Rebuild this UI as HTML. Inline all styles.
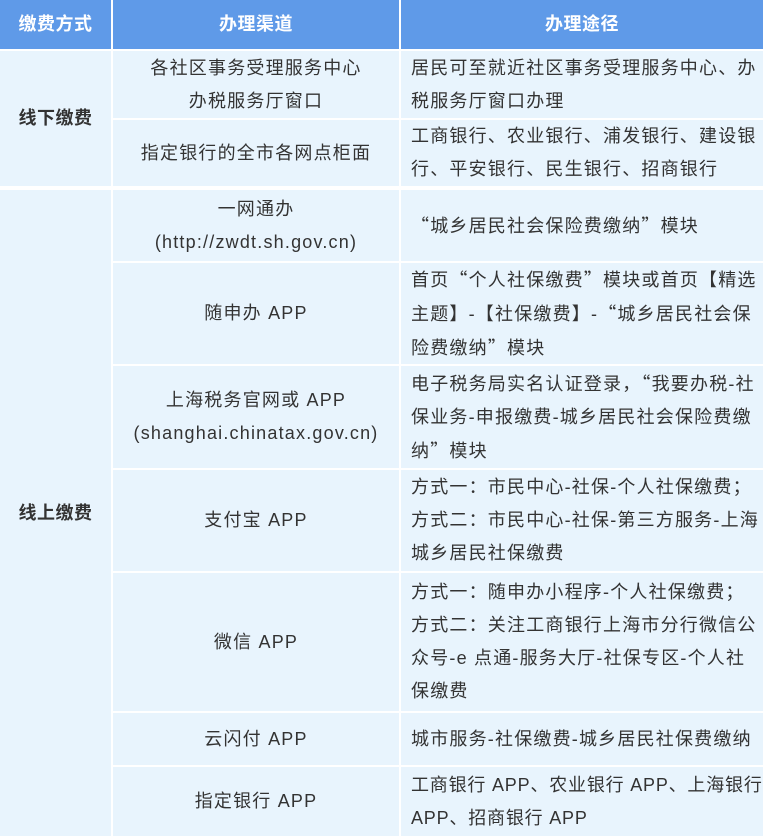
<!DOCTYPE html>
<html><head><meta charset="utf-8"><style>
body{margin:0;width:763px;height:839px;background:#fff;font-family:"Liberation Sans","Noto Sans CJK SC",sans-serif;font-size:18px;letter-spacing:1.2px;color:#333;overflow:hidden;position:relative}
.c{position:absolute;box-sizing:border-box;display:flex;align-items:center;background:#e8f4fd;line-height:33px;white-space:nowrap;overflow:hidden}
.h{background:#5f9ae8;color:#fff;font-weight:bold;justify-content:center;letter-spacing:0.5px}
.m{justify-content:center;text-align:center}
.l{padding-left:10px;padding-right:0}
.b{font-weight:bold;justify-content:center;letter-spacing:0.5px}
q{quotes:none;font-family:"Noto Sans CJK SC",sans-serif}
</style></head><body>
<div class="c h" style="left:0;top:0;width:111px;height:49px">缴费方式</div>
<div class="c h" style="left:113px;top:0;width:286px;height:49px">办理渠道</div>
<div class="c h" style="left:401px;top:0;width:362px;height:49px">办理途径</div>

<div class="c b" style="left:0;top:51px;width:111px;height:135px">线下缴费</div>
<div class="c b" style="left:0;top:190px;width:111px;height:646px">线上缴费</div>

<div class="c m" style="left:113px;top:51px;width:286px;height:67px">各社区事务受理服务中心<br>办税服务厅窗口</div>
<div class="c l" style="left:401px;top:51px;width:362px;height:67px"><span>居民可至就近社区事务受理服务中心、办<br>税服务厅窗口办理</span></div>
<div class="c m" style="left:113px;top:120px;width:286px;height:66px">指定银行的全市各网点柜面</div>
<div class="c l" style="left:401px;top:120px;width:362px;height:66px"><span>工商银行、农业银行、浦发银行、建设银<br>行、平安银行、民生银行、招商银行</span></div>

<div class="c m" style="left:113px;top:190px;width:286px;height:71px">一网通办<br>(http://zwdt.sh.gov.cn)</div>
<div class="c l" style="left:401px;top:190px;width:362px;height:71px"><span><q>“</q>城乡居民社会保险费缴纳<q>”</q>模块</span></div>
<div class="c m" style="left:113px;top:263px;width:286px;height:101px">随申办 APP</div>
<div class="c l" style="left:401px;top:263px;width:362px;height:101px"><span>首页<q>“</q>个人社保缴费<q>”</q>模块或首页【精选<br>主题】-【社保缴费】-<q>“</q>城乡居民社会保<br>险费缴纳<q>”</q>模块</span></div>
<div class="c m" style="left:113px;top:366px;width:286px;height:102px">上海税务官网或 APP<br>(shanghai.chinatax.gov.cn)</div>
<div class="c l" style="left:401px;top:366px;width:362px;height:102px"><span>电子税务局实名认证登录，<q>“</q>我要办税-社<br>保业务-申报缴费-城乡居民社会保险费缴<br>纳<q>”</q>模块</span></div>
<div class="c m" style="left:113px;top:470px;width:286px;height:101px">支付宝 APP</div>
<div class="c l" style="left:401px;top:470px;width:362px;height:101px"><span>方式一：市民中心-社保-个人社保缴费；<br>方式二：市民中心-社保-第三方服务-上海<br>城乡居民社保缴费</span></div>
<div class="c m" style="left:113px;top:573px;width:286px;height:138px">微信 APP</div>
<div class="c l" style="left:401px;top:573px;width:362px;height:138px"><span>方式一：随申办小程序-个人社保缴费；<br>方式二：关注工商银行上海市分行微信公<br>众号-e 点通-服务大厅-社保专区-个人社<br>保缴费</span></div>
<div class="c m" style="left:113px;top:713px;width:286px;height:52px">云闪付 APP</div>
<div class="c l" style="left:401px;top:713px;width:362px;height:52px">城市服务-社保缴费-城乡居民社保费缴纳</div>
<div class="c m" style="left:113px;top:767px;width:286px;height:69px">指定银行 APP</div>
<div class="c l" style="left:401px;top:767px;width:362px;height:69px"><span style="letter-spacing:0.8px">工商银行 APP、农业银行 APP、上海银行<br>APP、招商银行 APP</span></div>
</body></html>
